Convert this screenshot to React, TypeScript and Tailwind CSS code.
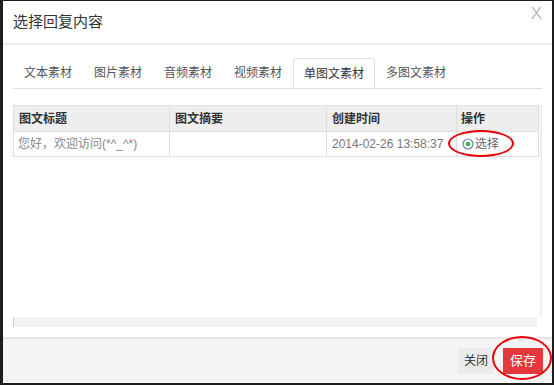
import React from "react";

const tabs = ["文本素材", "图片素材", "音频素材", "视频素材", "单图文素材", "多图文素材"];

function RadioDot() {
  return (
    <svg width="12" height="12" viewBox="0 0 12 12" className="shrink-0">
      <circle cx="6" cy="6" r="5" fill="#fff" stroke="#6a86a8" strokeWidth="1.2" />
      <circle cx="6" cy="6" r="2.3" fill="#35b34a" />
    </svg>
  );
}

export default function App() {
  return (
    <div className="w-[554px] h-[385px] bg-[#1c1c1c] pl-[3px] pt-px pr-[2px] pb-[2px] font-['Liberation_Sans','Noto_Sans_CJK_SC',sans-serif]">
      <div className="relative flex h-full flex-col bg-white">
        {/* header */}
        <div className="flex h-[44px] items-center justify-between border-b-2 border-[#eeeeee] pl-[10px] pr-[10px]">
          <span className="mt-px text-[15px] text-[#333]">选择回复内容</span>
          <span className="-mt-[16px] text-[17px] font-light text-[#bbbbbb]">X</span>
        </div>

        {/* tabs */}
        <div className="mx-[10px] mt-[13px] flex border-b border-[#dddddd]">
          {tabs.map((t, i) =>
            i === 4 ? (
              <div
                key={t}
                className="-mb-px flex h-[30px] items-center rounded-t-[4px] border border-b-0 border-[#dddddd] bg-white px-[10px] text-[12px] text-[#333]"
              >
                {t}
              </div>
            ) : (
              <div key={t} className="flex h-[30px] items-center px-[11px] text-[12px] text-[#555]">
                {t}
              </div>
            )
          )}
        </div>

        {/* scroll area */}
        <div className="mx-[10px] mt-[16px] flex flex-col">
          <div className="flex h-[212px]">
            <div className="flex-1">
              <div className="grid grid-cols-[156px_157px_130px_81px] border border-[#dddddd] text-[12px]">
                <div className="flex h-[25px] items-center border-r border-[#dddddd] bg-[#eeeeee] px-[5px] font-bold text-[#333]">图文标题</div>
                <div className="flex h-[25px] items-center border-r border-[#dddddd] bg-[#eeeeee] px-[5px] font-bold text-[#333]">图文摘要</div>
                <div className="flex h-[25px] items-center border-r border-[#dddddd] bg-[#eeeeee] px-[5px] font-bold text-[#333]">创建时间</div>
                <div className="flex h-[25px] items-center bg-[#eeeeee] px-[4px] font-bold text-[#333]">操作</div>
                <div className="flex h-[25px] items-center border-r border-t border-[#dddddd] px-[4px] text-[#888]">您好，欢迎访问(*^_^*)</div>
                <div className="flex h-[25px] items-center border-r border-t border-[#dddddd] px-[5px]"></div>
                <div className="flex h-[25px] items-center border-r border-t border-[#dddddd] px-[5px] text-[#777]">2014-02-26 13:58:37</div>
                <div className="relative flex h-[25px] items-center gap-px border-t border-dotted border-[#cccccc] px-[5px] text-[#666]">
                  <RadioDot />
                  <span>选择</span>
                  <div className="absolute left-[-9px] top-[-2px] h-[27px] w-[66px] rounded-[50%] border-2 border-[#e8000b]" />
                </div>
              </div>
            </div>
            <div className="ml-px w-[4px] bg-[#eeeeee]" />
          </div>
          <div className="mr-[5px] h-[10px] border-l border-[#cccccc] bg-[#f2f2f2]" />
        </div>

        {/* footer */}
        <div className="mt-auto mb-px flex h-[45px] items-center justify-end gap-[9px] border-t-2 border-[#e5e5e5] bg-[#f4f4f4] pr-[9px]">
          <div className="flex h-[26px] items-center bg-[#ebebeb] px-[6px] text-[12px] text-[#333]">关闭</div>
          <div className="relative flex h-[26px] w-[40px] items-center justify-center bg-[#e5383c] text-[13px] text-white">
            保存
            <div className="absolute left-[-11px] top-[-12px] h-[44px] w-[60px] rounded-[50%] border-2 border-[#e8000b]" />
          </div>
        </div>
      </div>
    </div>
  );
}
